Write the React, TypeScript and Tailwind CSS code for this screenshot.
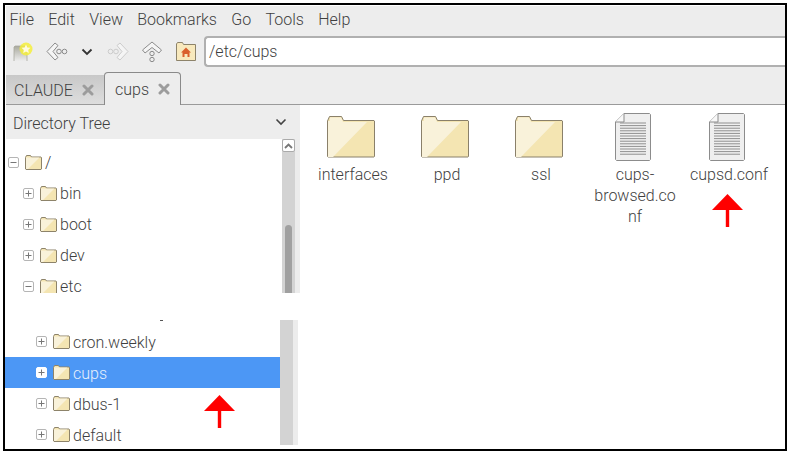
import React from 'react';

const menus = ['File', 'Edit', 'View', 'Bookmarks', 'Go', 'Tools', 'Help'];

const FolderSmall = () => (
  <svg width="17" height="15" viewBox="0 0 17 15" className="shrink-0">
    <path d="M.5 2.500 1.500 .5h4l1 1.500h9.500l.5 .5v11.500l-.5 .5H1l-.5-.5z" fill="#f4e5b2" stroke="#8d836a" />
    <path d="M1 2.500h13.500L3 14H1z" fill="#f9f2da" />
  </svg>
);

const FolderLarge = () => (
  <svg width="48" height="42" viewBox="0 0 48 42">
    <path d="M.5 5 2.500 .5h12l2 4h30.500l.5 .5v35.500l-.5 .5H1l-.5-.5z" fill="#f4e5b2" stroke="#8a806a" />
    <path d="M1 5h2L3 1.500h11l2 4.500h24L6 41H1z" fill="#f9f2da" />
  </svg>
);

const DocIcon = () => (
  <svg width="36" height="48" viewBox="0 0 36 48">
    <path d="M9 .5h25.500l1 1v45l-1 1h-33l-1-1V9z" fill="#efefef" stroke="#8c8c8c" />
    <path d="M9 .5V9H.5" fill="#f8f8f8" stroke="#8c8c8c" />
    {Array.from({ length: 13 }).map((_, i) => (
      <rect key={i} x="5" y={9.500 + i * 2.600} width="26" height="1" fill="#8f8f8f" />
    ))}
  </svg>
);

const CloseX = () => (
  <svg width="12" height="12" viewBox="0 0 12 12" className="shrink-0">
    <path d="M2 2l8 8M10 2l-8 8" stroke="#9c9c9c" strokeWidth="3" strokeLinecap="round" />
  </svg>
);

const Expander = ({ open, selected }: { open?: boolean; selected?: boolean }) => (
  <span className={`flex h-[11px] w-[11px] shrink-0 items-center justify-center rounded-[2px] border ${selected ? 'border-white bg-white' : 'border-[#b5b5b5] bg-white'}`}>
    <svg width="9" height="9" viewBox="0 0 9 9">
      <path d={open ? 'M1.500 4.500h6' : 'M1.500 4.500h6M4.500 1.500v6'} stroke="#777" strokeWidth="1" />
    </svg>
  </span>
);

const TreeRow = ({ label, indent, open, selected, low }: { label: string; indent: string; open?: boolean; selected?: boolean; low?: boolean }) => (
  <div className={`flex h-[31px] shrink-0 items-center ${indent} ${selected ? 'bg-[#4c97f5] text-[#e6effc]' : ''}`}>
    <Expander open={open} selected={selected} />
    <span className="ml-[6px]"><FolderSmall /></span>
    <span className={`ml-[3px] leading-[13px] ${low ? 'pt-[2px]' : ''}`}>{label}</span>
  </div>
);

const GridItem = ({ label, doc }: { label: string; doc?: boolean }) => (
  <div className="flex w-[94px] flex-col items-center">
    <div className="mr-[4px] flex h-[48px] items-center justify-center">{doc ? <DocIcon /> : <FolderLarge />}</div>
    <div className="mt-[3px] w-[90px] break-words text-center leading-[21px]">{label}</div>
  </div>
);

const RedArrow = ({ className }: { className: string }) => (
  <svg width="31" height="33" viewBox="0 0 31 33" className={className}>
    <path d="M15.500 0 31 16H17.200v17h-3.400V16H0z" fill="#ff0000" />
  </svg>
);

export default function App() {
  return (
    <div className="h-[453px] w-[789px] bg-white pl-[3px] pt-[3px] font-['Roboto',sans-serif] text-[16px] font-light text-[#3f3f3f]">
      <div className="relative flex h-[448px] w-[784px] flex-col overflow-hidden border-2 border-black bg-white">
        <div className="ml-px mt-px flex h-[30px] shrink-0 items-center gap-[14.300px] bg-[#ededed] pb-[3px] pl-[3.500px]">
          {menus.map(m => <span key={m}>{m}</span>)}
        </div>

        <div className="ml-px flex h-[31px] shrink-0 items-center bg-[#ededed]">
          <svg width="20" height="20" viewBox="0 0 20 20" className="ml-[7px] shrink-0">
            <defs>
              <linearGradient id="bm" x1="0" y1="0" x2="0" y2="1">
                <stop offset="0" stopColor="#a9a99e" />
                <stop offset="1" stopColor="#ededed" />
              </linearGradient>
            </defs>
            <path d="M1 19V5l1-1h12v15" fill="url(#bm)" stroke="#a8a8a0" strokeWidth=".8" />
            <circle cx="13" cy="7" r="6.500" fill="#f4ee3c" opacity=".85" />
            <path d="m13 2.500 1.400 2.900 3.100.4-2.300 2.100.6 3.100-2.800-1.500-2.800 1.500.6-3.100-2.300-2.100 3.100-.4z" fill="#fffbe0" />
          </svg>
          <svg width="22" height="22" viewBox="0 0 22 22" className="ml-[13px] shrink-0">
            <path d="M9 2 1 10.500 9 19l3-2.500-5-6 5-6z" fill="#f5f5f5" stroke="#8c8c8c" strokeLinejoin="round" />
            <circle cx="13" cy="10.500" r="2.300" fill="none" stroke="#8a8a8a" />
            <circle cx="18.500" cy="10.500" r="2.300" fill="none" stroke="#8a8a8a" />
          </svg>
          <svg width="12" height="8" viewBox="0 0 12 8" className="ml-[13px] shrink-0">
            <path d="M1.500 1.500 6 6l4.500-4.500" fill="none" stroke="#333" strokeWidth="1.800" />
          </svg>
          <svg width="22" height="22" viewBox="0 0 22 22" className="ml-[14px] shrink-0">
            <path d="M13 2l8 8.500L13 19l-3-2.500 5-6-5-6z" fill="#f5f5f5" stroke="#cccccc" strokeLinejoin="round" />
            <circle cx="9" cy="10.500" r="2.300" fill="none" stroke="#cccccc" />
            <circle cx="3.500" cy="10.500" r="2.300" fill="none" stroke="#cccccc" />
          </svg>
          <svg width="22" height="22" viewBox="0 0 22 22" className="ml-[12px] shrink-0">
            <path d="M11 1 1.500 9l2.500 3L11 6.500l7 5.500 2.500-3z" fill="#f5f5f5" stroke="#8c8c8c" strokeLinejoin="round" />
            <circle cx="11" cy="12.500" r="2.200" fill="none" stroke="#8a8a8a" />
            <circle cx="11" cy="18.500" r="2.200" fill="none" stroke="#8a8a8a" />
          </svg>
          <svg width="20" height="19" viewBox="0 0 20 19" className="ml-[13px] shrink-0">
            <path d="M.5 2 1.500 .5h5l1 2h12v16H.5z" fill="#f8e9bd" stroke="#8d836a" />
            <path d="M10 5.500 15 10.500h-1.500V15h-2v-3h-3v3h-2V10.500H5z" fill="#d9602d" />
          </svg>
          <div className="ml-[8px] flex h-[31px] flex-1 items-center rounded-l-[4px] border-y-2 border-l-2 border-[#b0b0b0] bg-white pl-[3px] pt-[1px]">
            /etc/cups
          </div>
        </div>

        <div className="ml-px flex h-[38px] shrink-0 items-end border-b border-[#9a9a9a] bg-[#ededed]">
          <div className="-mb-px flex h-[30px] w-[98px] items-center border-b border-[#9a9a9a] bg-gradient-to-b from-[#c8c8c8] to-[#dedede] pl-[8px]">
            <span className="pt-[2px]">CLAUDE</span>
            <span className="ml-[9px]"><CloseX /></span>
          </div>
          <div className="-mb-px flex h-[33px] w-[77px] items-center rounded-t-[4px] border border-b-0 border-[#8a8a8a] bg-[#ededed] pl-[10px]">
            <span className="pt-[2px]">cups</span>
            <span className="ml-[9px]"><CloseX /></span>
          </div>
        </div>

        <div className="flex min-h-0 flex-1">
          <div className="flex w-[295px] shrink-0 flex-col">
            <div className="ml-px flex h-[34px] shrink-0 items-center justify-between bg-[#ededed] pl-[7px] pr-[13px]">
              <span className="pt-[3px]">Directory Tree</span>
              <svg width="12" height="8" viewBox="0 0 12 8">
                <path d="M1.500 1.500 6 6l4.500-4.500" fill="none" stroke="#444" strokeWidth="1.600" />
              </svg>
            </div>

            <div className="ml-px flex h-[154px] shrink-0 overflow-hidden">
              <div className="min-w-0 flex-1 pt-[8px]">
                <TreeRow label="/" indent="pl-[2px]" open />
                <TreeRow label="bin" indent="pl-[17px]" />
                <TreeRow label="boot" indent="pl-[17px]" />
                <TreeRow label="dev" indent="pl-[17px]" />
                <TreeRow label="etc" indent="pl-[17px]" open />
              </div>
              <div className="flex w-[18px] shrink-0 bg-[#ececec]">
                <div className="flex h-full w-[13px] flex-col bg-[#d3d3d3]">
                  <div className="flex h-[13px] shrink-0 items-center justify-center rounded-[2px] border border-[#aaa] bg-white">
                    <svg width="9" height="6" viewBox="0 0 9 6">
                      <path d="M1 5 4.500 1.500 8 5" fill="none" stroke="#777" strokeWidth="1.800" />
                    </svg>
                  </div>
                  <div className="ml-[3px] mt-[73px] w-[7px] flex-1 rounded-t-[4px] bg-[#a0a0a0]" />
                </div>
              </div>
            </div>

            <div className="h-[27px] shrink-0" />

            <div className="flex h-[125px] w-[293px] shrink-0 overflow-hidden">
              <div className="min-w-0 flex-1 pt-[6px]">
                <TreeRow label="cron.weekly" indent="pl-[31px]" low />
                <TreeRow label="cups" indent="pl-[31px]" selected low />
                <TreeRow label="dbus-1" indent="pl-[31px]" low />
                <TreeRow label="default" indent="pl-[31px]" low />
              </div>
              <div className="w-[18px] shrink-0 bg-[#ececec]">
                <div className="h-full w-[13px] bg-[#d3d3d3]" />
              </div>
            </div>
          </div>

          <div className="flex min-w-0 flex-1 items-start pl-[6px] pt-[8px]">
            <GridItem label="interfaces" />
            <GridItem label="ppd" />
            <GridItem label="ssl" />
            <GridItem label="cups-browsed.conf" doc />
            <GridItem label="cupsd.conf" doc />
          </div>
        </div>

        <span className="absolute left-[155px] top-[315px] h-px w-[3px] bg-[#555]" />
        <RedArrow className="absolute left-[707px] top-[189px]" />
        <RedArrow className="absolute left-[199px] top-[390px]" />
      </div>
    </div>
  );
}
